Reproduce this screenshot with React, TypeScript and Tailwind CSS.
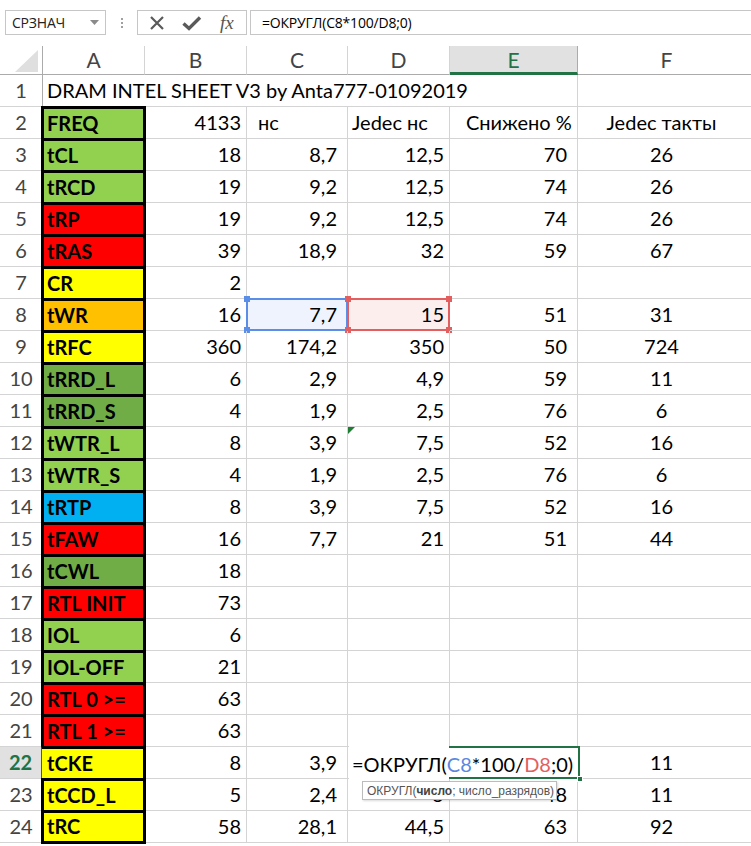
import React from "react";

type Row = {
  a: string;
  color?: string;
  b?: string;
  c?: string;
  d?: string;
  e?: string;
  f?: string;
};

const GL = "#92d050";
const DG = "#70ad47";
const RD = "#ff0000";
const YE = "#ffff00";
const OR = "#ffc000";
const BL = "#00b0f0";

const rows: Row[] = [
  { a: "FREQ", color: GL, b: "4133" },
  { a: "tCL", color: GL, b: "18", c: "8,7", d: "12,5", e: "70", f: "26" },
  { a: "tRCD", color: GL, b: "19", c: "9,2", d: "12,5", e: "74", f: "26" },
  { a: "tRP", color: RD, b: "19", c: "9,2", d: "12,5", e: "74", f: "26" },
  { a: "tRAS", color: RD, b: "39", c: "18,9", d: "32", e: "59", f: "67" },
  { a: "CR", color: YE, b: "2" },
  { a: "tWR", color: OR, b: "16", c: "7,7", d: "15", e: "51", f: "31" },
  { a: "tRFC", color: YE, b: "360", c: "174,2", d: "350", e: "50", f: "724" },
  { a: "tRRD_L", color: DG, b: "6", c: "2,9", d: "4,9", e: "59", f: "11" },
  { a: "tRRD_S", color: DG, b: "4", c: "1,9", d: "2,5", e: "76", f: "6" },
  { a: "tWTR_L", color: GL, b: "8", c: "3,9", d: "7,5", e: "52", f: "16" },
  { a: "tWTR_S", color: GL, b: "4", c: "1,9", d: "2,5", e: "76", f: "6" },
  { a: "tRTP", color: BL, b: "8", c: "3,9", d: "7,5", e: "52", f: "16" },
  { a: "tFAW", color: RD, b: "16", c: "7,7", d: "21", e: "51", f: "44" },
  { a: "tCWL", color: DG, b: "18" },
  { a: "RTL INIT", color: RD, b: "73" },
  { a: "IOL", color: GL, b: "6" },
  { a: "IOL-OFF", color: GL, b: "21" },
  { a: "RTL 0 >=", color: RD, b: "63" },
  { a: "RTL 1 >=", color: RD, b: "63" },
  { a: "tCKE", color: YE, b: "8", c: "3,9", d: "", e: "", f: "11" },
  { a: "tCCD_L", color: YE, b: "5", c: "2,4", d: "5", e: "48", f: "11" },
  { a: "tRC", color: YE, b: "58", c: "28,1", d: "44,5", e: "63", f: "92" },
];

const cellBase =
  "h-[32px] shrink-0 border-r border-b border-[#d4d4d4] flex items-end pb-[5px] leading-[22px] text-[20px] text-black whitespace-nowrap relative";

function Corner({ pos, color }: { pos: string; color: string }) {
  return <div className={`absolute w-[6px] h-[6px] ${pos} ${color}`} />;
}

function FormulaBar() {
  return (
    <div className="h-[46px] flex items-start pt-[10px] bg-white">
      <div className="ml-[5px] w-[101px] h-[25px] border border-[#c6c6c6] flex items-center justify-between pl-[6px] pr-[6px]">
        <span className="text-[14px] text-[#222] font-['Open_Sans',sans-serif] tracking-[-0.2px]">СРЗНАЧ</span>
        <svg width="9" height="5" viewBox="0 0 9 5">
          <path d="M0 0 L9 0 L4.5 5 Z" fill="#8a8a8a" />
        </svg>
      </div>
      <div className="w-[31px] h-[25px] flex flex-col items-center justify-center gap-[2px]">
        <div className="w-[2px] h-[2px] bg-[#a0a0a0]" />
        <div className="w-[2px] h-[2px] bg-[#a0a0a0]" />
        <div className="w-[2px] h-[2px] bg-[#a0a0a0]" />
      </div>
      <div className="w-[110px] h-[25px] border border-[#c6c6c6] flex items-center">
        <svg width="16" height="16" viewBox="0 0 16 16" className="ml-[11px]">
          <path d="M2 2 L14 14 M14 2 L2 14" stroke="#5a5a5a" strokeWidth="2.2" />
        </svg>
        <svg width="20" height="16" viewBox="0 0 20 16" className="ml-[17px]">
          <path d="M1.5 8.5 L7 13.5 L18 2.5" stroke="#5a5a5a" strokeWidth="3.4" fill="none" />
        </svg>
        <span className="ml-[18px] text-[19px] italic text-[#555] font-['Liberation_Serif',serif] leading-none">
          fx
        </span>
      </div>
      <div className="ml-[3px] flex-1 h-[25px] border-y border-l border-[#c6c6c6] flex items-center pl-[11px]">
        <span className="text-[14px] text-black font-['Open_Sans',sans-serif] tracking-[-0.2px]">
          =ОКРУГЛ(C8*100/D8;0)
        </span>
      </div>
    </div>
  );
}

function HeaderRow() {
  const letters = [
    { l: "A", w: "w-[102px]" },
    { l: "B", w: "w-[102px]" },
    { l: "C", w: "w-[101px]" },
    { l: "D", w: "w-[102px]" },
    { l: "E", w: "w-[128px]", sel: true },
    { l: "F", w: "w-[178px]" },
  ];
  return (
    <div className="flex h-[29px]">
      <div className="w-[43px] shrink-0 h-[29px] border-r border-b border-[#ababab] relative bg-white">
        <svg width="43" height="29" viewBox="0 0 43 29" className="absolute inset-0">
          <path d="M15 26 L38 26 L38 4 Z" fill="#dfdfdf" />
        </svg>
      </div>
      {letters.map((c) =>
        c.sel ? (
          <div
            key={c.l}
            className={`${c.w} shrink-0 h-[29px] bg-[#e1e1e1] border-r border-[#ababab] border-b-[3px] border-b-[#217346] flex items-center justify-center text-[21px] text-[#217346] pt-[2px]`}
          >
            {c.l}
          </div>
        ) : (
          <div
            key={c.l}
            className={`${c.w} shrink-0 h-[29px] border-r border-b border-[#d4d4d4] border-b-[#ababab] flex items-center justify-center text-[21px] text-[#444]`}
          >
            {c.l}
          </div>
        )
      )}
    </div>
  );
}

function RowHeader({ n, sel }: { n: number; sel?: boolean }) {
  return sel ? (
    <div className="w-[43px] shrink-0 h-[32px] bg-[#e1e1e1] border-r-[2px] border-r-[#217346] border-b border-[#d4d4d4] flex items-end justify-center pb-[5px] leading-[22px] text-[20px] font-bold text-[#217346]">
      {n}
    </div>
  ) : (
    <div className="w-[43px] shrink-0 h-[32px] border-r border-r-[#ababab] border-b border-[#d4d4d4] flex items-end justify-center pb-[5px] leading-[22px] text-[20px] text-[#444]">
      {n}
    </div>
  );
}

function ACell({ r, idx }: { r: Row; idx: number }) {
  const last = idx === rows.length - 1;
  const noLeft = idx === 20; // tCKE row
  return (
    <div className="w-[102px] shrink-0 h-[32px] border-b border-[#d4d4d4] border-r border-r-[#d4d4d4] relative z-10">
      <div
        className={`absolute left-[-2px] right-[-2px] top-[-1px] border-t-[3px] border-r-[3px] border-black flex items-end pb-[4px] pl-[3px] leading-[22px] text-[20px] font-bold text-black whitespace-nowrap ${
          noLeft ? "border-l-[1px] border-l-[#217346] pl-[5px]" : "border-l-[3px]"
        } ${last ? "border-b-[3px] bottom-[-2px]" : "bottom-0"}`}
        style={{ backgroundColor: r.color }}
      >
        {r.a}
      </div>
    </div>
  );
}

export default function App() {
  return (
    <div className="w-[751px] h-[846px] overflow-hidden bg-white font-['Lato',sans-serif] relative">
      <FormulaBar />
      <HeaderRow />
      {/* Row 1 */}
      <div className="flex">
        <RowHeader n={1} />
        <div className={`${cellBase} w-[102px] pl-[4px] overflow-visible z-10 border-r-0`}>
          <span className="absolute left-[4px] bottom-[5px]">DRAM INTEL SHEET V3 by Anta777-01092019</span>
        </div>
        <div className={`${cellBase} w-[102px] border-r-0`} />
        <div className={`${cellBase} w-[101px] border-r-0`} />
        <div className={`${cellBase} w-[102px] border-r-0`} />
        <div className={`${cellBase} w-[128px]`} />
        <div className={`${cellBase} w-[178px]`} />
      </div>
      {rows.map((r, i) => {
        const rowNum = i + 2;
        const isHeader = rowNum === 2;
        const sel22 = rowNum === 22;
        return (
          <div className="flex relative" key={rowNum}>
            <RowHeader n={rowNum} sel={sel22} />
            <ACell r={r} idx={i} />
            <div className={`${cellBase} w-[102px] justify-end pr-[5px]`}>{r.b}</div>
            {isHeader ? (
              <>
                <div className={`${cellBase} w-[101px] pl-[11px]`}>нс</div>
                <div className={`${cellBase} w-[102px] pl-[4px]`}>Jedec нс</div>
                <div className={`${cellBase} w-[128px] pl-[16px]`}>Снижено %</div>
                <div className={`${cellBase} w-[178px] justify-center pr-[10px]`}>Jedec такты</div>
              </>
            ) : rowNum === 8 ? (
              <>
                <div className={`${cellBase} w-[101px] justify-end pr-[10px] bg-[#eef3fd]`}>
                  <div className="absolute left-[-1px] top-[-1px] right-[-1px] bottom-[-1px] border-[2px] border-[#5b8ee6]" />
                  <Corner pos="left-[-3px] top-[-3px]" color="bg-[#5b8ee6]" />
                  <Corner pos="left-[-3px] bottom-[-3px]" color="bg-[#5b8ee6]" />
                  <span className="relative">{r.c}</span>
                </div>
                <div className={`${cellBase} w-[102px] justify-end pr-[5px] bg-[#fdeeee]`}>
                  <div className="absolute left-[-1px] top-[-1px] right-[-1px] bottom-[-1px] border-[2px] border-[#e35f5f]" />
                  <Corner pos="left-[-3px] top-[-3px]" color="bg-[#e35f5f]" />
                  <Corner pos="left-[-3px] bottom-[-3px]" color="bg-[#e35f5f]" />
                  <Corner pos="right-[-3px] top-[-3px]" color="bg-[#e35f5f]" />
                  <Corner pos="right-[-3px] bottom-[-3px]" color="bg-[#e35f5f]" />
                  <span className="relative">{r.d}</span>
                </div>
                <div className={`${cellBase} w-[128px] justify-end pr-[10px]`}>{r.e}</div>
                <div className={`${cellBase} w-[178px] justify-center pr-[10px]`}>{r.f}</div>
              </>
            ) : (
              <>
                <div className={`${cellBase} w-[101px] justify-end pr-[10px]`}>{r.c}</div>
                <div className={`${cellBase} w-[102px] justify-end pr-[5px]`}>
                  {rowNum === 12 && (
                    <svg width="7" height="7" viewBox="0 0 7 7" className="absolute left-0 top-0">
                      <path d="M0 0 L7 0 L0 7 Z" fill="#1e7d32" />
                    </svg>
                  )}
                  {r.d}
                </div>
                <div className={`${cellBase} w-[128px] justify-end pr-[10px]`}>{r.e}</div>
                <div className={`${cellBase} w-[178px] justify-center pr-[10px]`}>{r.f}</div>
              </>
            )}
            {sel22 && (
              <div className="absolute left-[349px] top-[-1px] w-[231px] h-[33px] bg-white z-20">
                <div className="absolute left-[100px] top-0 right-0 bottom-0 border-[2px] border-l-0 border-[#217346]" />
                <div className="absolute right-[-3px] bottom-[-3px] w-[6px] h-[6px] bg-[#217346] border border-white" />
                <div className="absolute left-[3px] bottom-[4px] leading-[22px] text-[20px] text-black whitespace-nowrap">
                  =ОКРУГЛ(<span className="text-[#5b87e0]">C8</span>*100/<span className="text-[#e35f5f]">D8</span>;0)
                </div>
              </div>
            )}
            {rowNum === 23 && (
              <div className="absolute left-[362px] top-[2px] w-[195px] h-[19px] bg-white border border-[#bcbcbc] shadow-[1px_1px_2px_rgba(0,0,0,0.15)] z-30 flex items-center pl-[4px] text-[12px] text-[#555] font-['Liberation_Sans',sans-serif] whitespace-nowrap">
                ОКРУГЛ(<b className="font-bold text-[#444]">число</b>; число_разрядов)
              </div>
            )}
          </div>
        );
      })}
    </div>
  );
}
